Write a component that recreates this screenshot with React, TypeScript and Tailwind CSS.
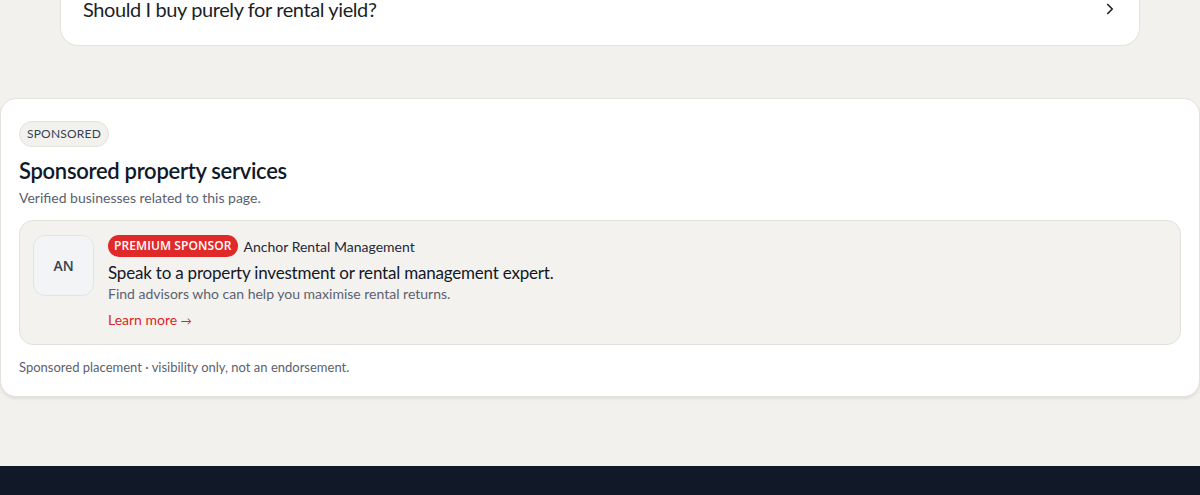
import React from "react";
import { ChevronRight } from "lucide-react";

const sans = "font-['Lato','Liberation_Sans',sans-serif]";
const alt = "font-['Open_Sans','Liberation_Sans',sans-serif]";

const FaqRow = ({ question }: { question: string }) => (
  <div className="mx-[60px] -mt-[20px] flex h-[66px] items-end rounded-b-[18px] border border-t-0 border-[#e4e2dd] bg-white px-[22px] pb-[24px]">
    <span className="flex-1 text-[20px] leading-[24px] tracking-[-0.4px] text-[#1c1f26]">{question}</span>
    <ChevronRight className="mr-[-2px] mb-[3px] h-[18px] w-[18px] text-[#1c1f26]" strokeWidth={2.2} />
  </div>
);

const SponsorCard = () => (
  <div className="flex gap-[14px] rounded-[14px] border border-[#e2e0db] bg-[#f4f2ef] px-[13px] pt-[14px] pb-[13px]">
    <div
      className={`flex h-[61px] w-[61px] shrink-0 items-center justify-center rounded-[12px] border border-[#e2e3e7] bg-[#f3f4f6] text-[14px] font-semibold text-[#374151] ${alt}`}
    >
      AN
    </div>
    <div className="flex flex-col">
      <div className="flex items-center gap-[6px]">
        <span
          className={`rounded-full bg-[#e02a2a] px-[6px] py-[2px] text-[12px] leading-[18px] font-semibold tracking-[0.1px] text-white ${alt}`}
        >
          PREMIUM SPONSOR
        </span>
        <span className="text-[14px] text-[#1f2937]">Anchor Rental Management</span>
      </div>
      <span className="mt-[5px] text-[17px] leading-[22px] tracking-[-0.2px] text-[#111827]">
        Speak to a property investment or rental management expert.
      </span>
      <span className="text-[14px] leading-[20px] text-[#5b6170]">
        Find advisors who can help you maximise rental returns.
      </span>
      <a className="mt-[6px] text-[14px] leading-[20px] text-[#dc2626]" href="#">
        Learn more <span className="text-[11px]">→</span>
      </a>
    </div>
  </div>
);

export default function App() {
  return (
    <div className={`flex h-[495px] flex-col overflow-hidden bg-[#f2f1ee] ${sans}`}>
      <FaqRow question="Should I buy purely for rental yield?" />

      <section className="mt-[52px] rounded-[16px] border border-[#e4e2dd] bg-white px-[18px] pt-[21px] pb-[20px] shadow-[0_2px_3px_rgba(0,0,0,0.08)]">
        <span className="inline-block rounded-full border border-[#e2e0db] bg-[#f2f1ee] px-[7px] py-[4px] text-[12px] leading-[16px] tracking-[0.2px] text-[#374151]">
          SPONSORED
        </span>
        <h2 className="mt-[9px] text-[22px] leading-[30px] font-semibold tracking-[-0.3px] text-[#111827]">
          Sponsored property services
        </h2>
        <p className="mt-[2px] text-[14px] leading-[20px] text-[#5b6170]">
          Verified businesses related to this page.
        </p>
        <div className="mt-[12px]">
          <SponsorCard />
        </div>
        <p className="mt-[13px] text-[13px] leading-[18px] text-[#5b6170]">
          Sponsored placement · visibility only, not an endorsement.
        </p>
      </section>

      <div className="flex-1" />
      <footer className="h-[29px] bg-[#111827]" />
    </div>
  );
}
